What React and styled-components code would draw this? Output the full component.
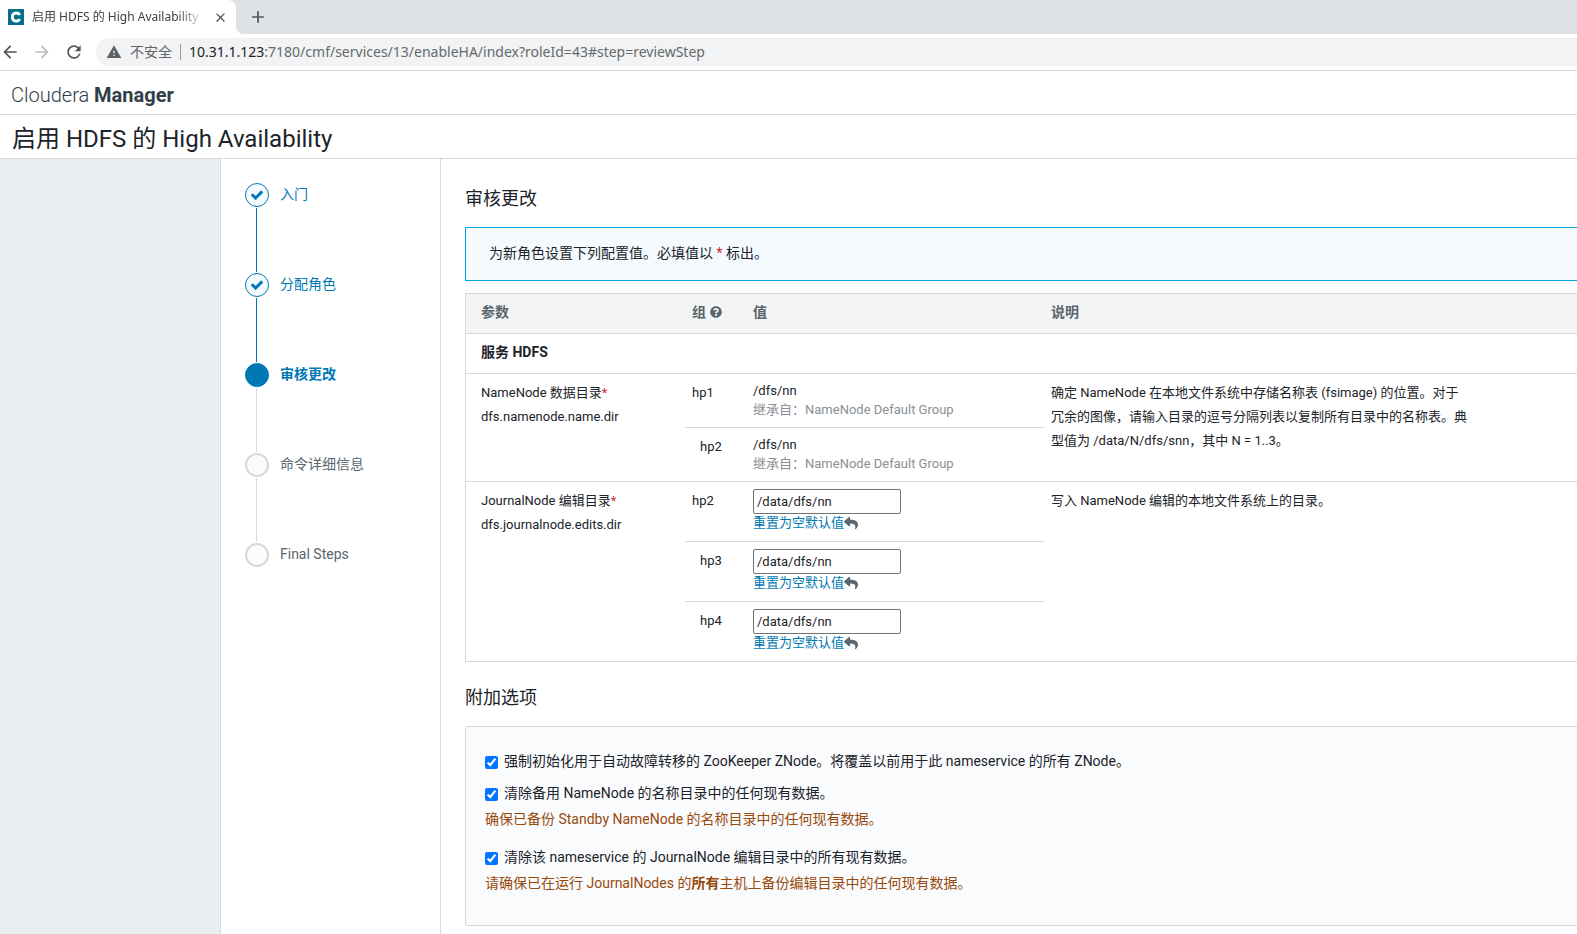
import { useState } from "react";
import styled, { createGlobalStyle, ThemeProvider } from "styled-components";
import { FaQuestionCircle, FaReply } from "react-icons/fa";
import {
  MdAdd,
  MdArrowBack,
  MdArrowForward,
  MdClose,
  MdRefresh,
  MdWarning,
} from "react-icons/md";

const theme = {
  colors: {
    accent: "#0078b5",
    border: "#d6d8dc",
    text: "#1b2329",
    muted: "#5a656d",
    faint: "#8a9095",
    warning: "#984a0c",
    danger: "#dc1f26",
  },
};

const steps = [
  { name: "入门", status: "done" },
  { name: "分配角色", status: "done" },
  { name: "审核更改", status: "current" },
  { name: "命令详细信息", status: "todo" },
  { name: "Final Steps", status: "todo" },
];

const params = [
  {
    label: "NameNode 数据目录",
    property: "dfs.namenode.name.dir",
    description:
      "确定 NameNode 在本地文件系统中存储名称表 (fsimage) 的位置。对于冗余的图像，请输入目录的逗号分隔列表以复制所有目录中的名称表。典型值为 /data/N/dfs/snn，其中 N = 1..3。",
    groups: [
      { host: "hp1", value: "/dfs/nn", inherited: "NameNode Default Group" },
      { host: "hp2", value: "/dfs/nn", inherited: "NameNode Default Group" },
    ],
  },
  {
    label: "JournalNode 编辑目录",
    property: "dfs.journalnode.edits.dir",
    description: "写入 NameNode 编辑的本地文件系统上的目录。",
    groups: [
      { host: "hp2", value: "/data/dfs/nn" },
      { host: "hp3", value: "/data/dfs/nn" },
      { host: "hp4", value: "/data/dfs/nn" },
    ],
  },
];

const BrowserChrome = () => (
  <Chrome>
    <TabStrip>
      <Tab>
        <Favicon viewBox="0 0 16 16" aria-hidden="true">
          <rect width="16" height="16" fill="#04708a" />
          <path
            d="M11.6 6C11 4.6 9.8 3.9 8.2 3.9C5.9 3.9 4.3 5.6 4.3 8S5.9 12.1 8.2 12.1C9.8 12.1 11 11.4 11.6 10"
            fill="none"
            stroke="#fff"
            strokeWidth="3"
          />
        </Favicon>
        <TabTitle>启用 HDFS 的 High Availability</TabTitle>
        <IconButton aria-label="Close tab">
          <MdClose size={15} />
        </IconButton>
      </Tab>
      <IconButton aria-label="New tab">
        <MdAdd size={20} />
      </IconButton>
    </TabStrip>
    <Toolbar>
      <IconButton aria-label="Back">
        <MdArrowBack size={20} />
      </IconButton>
      <IconButton aria-label="Forward" disabled>
        <MdArrowForward size={20} />
      </IconButton>
      <IconButton aria-label="Reload">
        <MdRefresh size={20} />
      </IconButton>
      <AddressBar>
        <MdWarning size={16} />
        <Security>不安全</Security>
        <Url>
          <b>10.31.1.123</b>:7180/cmf/services/13/enableHA/index?roleId=43#step=reviewStep
        </Url>
      </AddressBar>
    </Toolbar>
  </Chrome>
);

const CheckIcon = () => (
  <svg width="14" height="14" viewBox="0 0 1792 1792" aria-hidden="true">
    <path
      fill="currentColor"
      d="M1671 566q0 40-28 68l-724 724-136 136q-28 28-68 28t-68-28l-136-136-362-362q-28-28-28-68t28-68l136-136q28-28 68-28t68 28l294 295 656-657q28-28 68-28t68 28l136 136q28 28 28 68z"
    />
  </svg>
);

const Stepper = () => (
  <StepList>
    {steps.map(({ name, status }) => (
      <Step key={name} $status={status}>
        <StepCircle $status={status}>
          {status === "done" && <CheckIcon />}
        </StepCircle>
        <StepLabel $status={status}>{name}</StepLabel>
      </Step>
    ))}
  </StepList>
);

const GroupValue = ({ id, host, value, inherited }) => {
  const [current, setCurrent] = useState(value);

  if (inherited) {
    return (
      <>
        <div>{value}</div>
        <Inherited>继承自：{inherited}</Inherited>
      </>
    );
  }

  return (
    <>
      <ValueInput
        id={id}
        aria-label={host}
        value={current}
        onChange={(e) => setCurrent(e.target.value)}
      />
      <ResetLink
        href="#reset"
        onClick={(e) => {
          e.preventDefault();
          setCurrent("");
        }}
      >
        <span>重置为空默认值</span>
        <FaReply size={14} />
      </ResetLink>
    </>
  );
};

const ParamRows = ({ label, property, description, groups }) =>
  groups.map((group, i) => (
    <tr key={group.host}>
      {i === 0 && (
        <Cell rowSpan={groups.length} $first>
          {label}
          <Required>*</Required>
          <div>{property}</div>
        </Cell>
      )}
      <Cell $indent={i > 0}>{group.host}</Cell>
      <ValueCell>
        <GroupValue id={`${property}-${group.host}`} {...group} />
      </ValueCell>
      {i === 0 && (
        <Cell rowSpan={groups.length}>
          <Description>{description}</Description>
        </Cell>
      )}
    </tr>
  ));

const Option = ({ id, label, children }) => (
  <>
    <OptionRow>
      <Checkbox type="checkbox" id={id} defaultChecked />
      <label htmlFor={id}>{label}</label>
    </OptionRow>
    {children && <OptionNote>{children}</OptionNote>}
  </>
);

const App = () => {
  return (
    <ThemeProvider theme={theme}>
      <GlobalStyle />
      <Page>
        <BrowserChrome />
        <Brand>
          Cloudera <strong>Manager</strong>
        </Brand>
        <PageTitle>启用 HDFS 的 High Availability</PageTitle>
        <Layout>
          <Gutter />
          <Stepper />
          <Main>
            <Content>
              <SectionTitle>审核更改</SectionTitle>
              <Notice>
                为新角色设置下列配置值。必填值以 <Required>*</Required> 标出。
              </Notice>
              <Table>
                <colgroup>
                  <Col $width={219} />
                  <Col $width={61} />
                  <Col $width={298} />
                  <col />
                </colgroup>
                <thead>
                  <tr>
                    <HeadCell $first>参数</HeadCell>
                    <HeadCell>
                      <HeadLabel>
                        组 <FaQuestionCircle size={12} />
                      </HeadLabel>
                    </HeadCell>
                    <HeadCell>值</HeadCell>
                    <HeadCell>说明</HeadCell>
                  </tr>
                </thead>
                <tbody>
                  <tr>
                    <ServiceCell colSpan={4}>服务 HDFS</ServiceCell>
                  </tr>
                </tbody>
                {params.map((param) => (
                  <tbody key={param.property}>
                    <ParamRows {...param} />
                  </tbody>
                ))}
              </Table>
              <SectionTitle $spaced>附加选项</SectionTitle>
              <Options>
                <Option
                  id="force-init-znode"
                  label="强制初始化用于自动故障转移的 ZooKeeper ZNode。将覆盖以前用于此 nameservice 的所有 ZNode。"
                />
                <Option
                  id="clear-standby"
                  label="清除备用 NameNode 的名称目录中的任何现有数据。"
                >
                  确保已备份 Standby NameNode 的名称目录中的任何现有数据。
                </Option>
                <Option
                  id="clear-journal"
                  label="清除该 nameservice 的 JournalNode 编辑目录中的所有现有数据。"
                >
                  请确保已在运行 JournalNodes 的<strong>所有</strong>
                  主机上备份编辑目录中的任何现有数据。
                </Option>
              </Options>
            </Content>
          </Main>
        </Layout>
      </Page>
    </ThemeProvider>
  );
};

export default App;

const GlobalStyle = createGlobalStyle`
  *, *::before, *::after {
    box-sizing: border-box;
  }

  body {
    margin: 0;
    background-color: #fff;
    color: #1b2329;
    font-family: Roboto, "Noto Sans CJK SC", sans-serif;
    font-size: 14px;
    line-height: 24px;
  }
`;

const Page = styled.div`
  display: flex;
  flex-direction: column;
  min-height: 100vh;
  overflow: hidden;
`;

const Chrome = styled.div`
  font-family: "Noto Sans", "Noto Sans CJK SC", sans-serif;
  color: #5f6368;
  border-bottom: 1px solid ${(props) => props.theme.colors.border};
`;

const TabStrip = styled.div`
  display: flex;
  align-items: center;
  gap: 12px;
  height: 34px;
  background-color: #dee1e6;
`;

const Tab = styled.div`
  position: relative;
  display: flex;
  align-items: center;
  gap: 8px;
  width: 236px;
  height: 34px;
  padding: 0 8px;
  background-color: #fff;
  border-top-right-radius: 8px;

  /* outward curve where the tab meets the toolbar */
  &::after {
    content: "";
    position: absolute;
    left: 100%;
    bottom: 0;
    width: 8px;
    height: 8px;
    background: radial-gradient(circle at 100% 0, #dee1e6 8px, #fff 8px);
  }
`;

const Favicon = styled.svg`
  width: 16px;
  height: 16px;
  flex-shrink: 0;
`;

const TabTitle = styled.div`
  flex: 1;
  overflow: hidden;
  white-space: nowrap;
  font-size: 12px;
  color: #3c4043;
  mask-image: linear-gradient(to right, #000 85%, transparent);
`;

const IconButton = styled.button`
  display: flex;
  align-items: center;
  justify-content: center;
  min-width: 16px;
  padding: 0;
  border: 0;
  background: none;
  color: #505458;

  &:disabled {
    color: #bbbdbf;
  }
`;

const Toolbar = styled.div`
  display: flex;
  align-items: center;
  gap: 12px;
  height: 36px;
`;

const AddressBar = styled.div`
  display: flex;
  align-items: center;
  flex: 1;
  height: 28px;
  padding-left: 10px;
  border-radius: 14px 0 0 14px;
  background-color: #f1f3f4;
  white-space: nowrap;
`;

const Security = styled.span`
  margin-left: 8px;
  padding-right: 8px;
  border-right: 1px solid #9a9da1;
  line-height: 16px;
`;

const Url = styled.span`
  margin-left: 8px;
  color: #66696d;

  & > b {
    font-weight: 400;
    color: #202124;
  }
`;

const Brand = styled.header`
  padding: 12px 11px 7px;
  border-bottom: 1px solid ${(props) => props.theme.colors.border};
  color: #303e47;
  font-size: 20px;
  font-weight: 300;

  & > strong {
    font-weight: 700;
  }
`;

const PageTitle = styled.h1`
  margin: 0;
  padding: 8px 12px 3px;
  border-bottom: 1px solid ${(props) => props.theme.colors.border};
  font-size: 24px;
  font-weight: 400;
  line-height: 32px;
`;

const Layout = styled.div`
  display: flex;
  flex: 1;
`;

const Gutter = styled.div`
  width: 221px;
  flex-shrink: 0;
  border-right: 1px solid ${(props) => props.theme.colors.border};
  background-color: #eaeef1;
`;

const StepList = styled.ol`
  width: 220px;
  flex-shrink: 0;
  margin: 0;
  padding: 24px;
  border-right: 1px solid ${(props) => props.theme.colors.border};
  list-style: none;
`;

const Step = styled.li`
  position: relative;
  display: flex;
  gap: 11px;
  height: 90px;

  &:not(:last-child)::after {
    content: "";
    position: absolute;
    left: 11px;
    top: 25px;
    bottom: 1px;
    width: 1px;
    background-color: ${({ $status, theme }) =>
      $status === "done" ? theme.colors.accent : theme.colors.border};
  }
`;

const StepCircle = styled.span`
  display: flex;
  align-items: center;
  justify-content: center;
  width: 24px;
  height: 24px;
  border: ${({ $status, theme }) =>
    $status === "todo"
      ? `2px solid ${theme.colors.border}`
      : `1px solid ${theme.colors.accent}`};
  border-radius: 50%;
  color: ${(props) => props.theme.colors.accent};
  background-color: ${({ $status, theme }) =>
    ({ done: "#f5faff", current: theme.colors.accent, todo: "#fafbfd" })[
      $status
    ]};
`;

const StepLabel = styled.span`
  line-height: 22px;
  color: ${({ $status, theme }) =>
    $status === "todo" ? theme.colors.muted : theme.colors.accent};
  font-weight: ${(props) => (props.$status === "current" ? 700 : 400)};
`;

const Main = styled.main`
  flex: 1;
  min-width: 0;
  padding: 24px 0 8px 24px;
`;

/* the wizard body runs on past the right edge of the window */
const Content = styled.div`
  margin-right: -24px;
`;

const SectionTitle = styled.h2`
  margin: ${(props) => (props.$spaced ? "20px" : "0")} 0 12px;
  font-size: 18px;
  font-weight: 400;
  line-height: 32px;
`;

const Notice = styled.div`
  margin-bottom: 12px;
  padding: 13px 23px 15px;
  border: 1px solid #00a3dd;
  background-color: #f5faff;
`;

const Required = styled.span`
  color: ${(props) => props.theme.colors.danger};
`;

const Table = styled.table`
  width: 100%;
  table-layout: fixed;
  border: 1px solid ${(props) => props.theme.colors.border};
  border-spacing: 0;
  font-size: 13px;

  & > tbody:last-child td {
    border-bottom-width: 0;
  }

  & > tbody:last-child tr:not(:last-child) td:not([rowspan]) {
    border-bottom-width: 1px;
  }
`;

const Col = styled.col`
  width: ${(props) => props.$width}px;
`;

const Cell = styled.td`
  padding: 7px 7px 8px;
  padding-left: ${({ $first, $indent }) => ($first || $indent ? 15 : 7)}px;
  border-bottom: 1px solid ${(props) => props.theme.colors.border};
  text-align: left;
  vertical-align: top;
`;

const ValueCell = styled(Cell)`
  line-height: 19px;
`;

const HeadCell = styled(Cell).attrs({ as: "th" })`
  padding-top: 6px;
  padding-bottom: 9px;
  background-color: #f3f4f6;
  color: ${(props) => props.theme.colors.muted};
  font-size: 14px;
  font-weight: 700;
`;

const HeadLabel = styled.span`
  display: flex;
  align-items: center;
  gap: 4px;
`;

const ServiceCell = styled(Cell)`
  padding: 6px 15px 9px;
  font-size: 14px;
  font-weight: 700;
`;

const Inherited = styled.div`
  color: ${(props) => props.theme.colors.faint};
`;

const ValueInput = styled.input`
  display: block;
  width: 148px;
  height: 25px;
  padding: 0 3px;
  border: 1px solid #6f7275;
  border-radius: 2px;
  color: inherit;
  font-family: inherit;
  font-size: 13px;
`;

const ResetLink = styled.a`
  display: flex;
  align-items: center;
  margin-bottom: 2px;
  color: ${(props) => props.theme.colors.accent};
  line-height: 17px;
  text-decoration: none;

  & > svg {
    color: ${(props) => props.theme.colors.muted};
  }
`;

const Description = styled.div`
  max-width: 418px;
`;

const Options = styled.div`
  padding: 22px 19px 16px;
  border: 1px solid ${(props) => props.theme.colors.border};
  border-radius: 2px;
  background-color: #fafbfd;
`;

const OptionRow = styled.div`
  display: flex;
  align-items: center;
  gap: 6px;
  margin-bottom: 8px;
`;

const Checkbox = styled.input`
  width: 13px;
  height: 13px;
  margin: 2px 0 0;
`;

const OptionNote = styled.div`
  margin: -7px 0 13px;
  color: ${(props) => props.theme.colors.warning};
  line-height: 26px;
`;
